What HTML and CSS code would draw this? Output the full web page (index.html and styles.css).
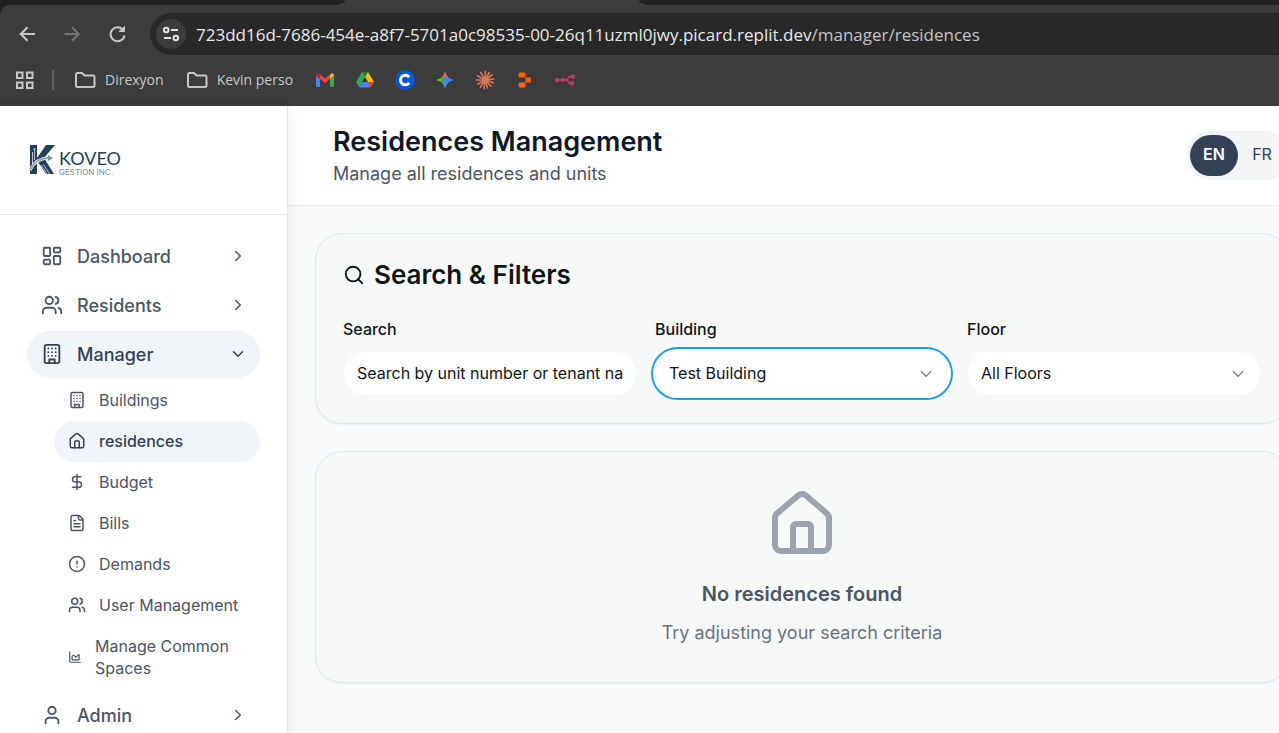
FILE: index.html
```html
<!DOCTYPE html>
<html lang="en">
<head>
<meta charset="utf-8">
<title>Residences Management</title>
<link rel="stylesheet" href="styles.css">
</head>
<body>
<svg class="sprite" aria-hidden="true">
  <symbol id="i-dashboard" viewBox="0 0 24 24"><rect x="3" y="3" width="7" height="9" rx="1"/><rect x="14" y="3" width="7" height="5" rx="1"/><rect x="14" y="12" width="7" height="9" rx="1"/><rect x="3" y="16" width="7" height="5" rx="1"/></symbol>
  <symbol id="i-users" viewBox="0 0 24 24"><path d="M16 21v-2a4 4 0 0 0-4-4H6a4 4 0 0 0-4 4v2"/><circle cx="9" cy="7" r="4"/><path d="M22 21v-2a4 4 0 0 0-3-3.870"/><path d="M16 3.130a4 4 0 0 1 0 7.750"/></symbol>
  <symbol id="i-building" viewBox="0 0 24 24"><rect x="4" y="2" width="16" height="20" rx="2"/><path d="M9 22v-4h6v4"/><path d="M8 6h.01M16 6h.01M12 6h.01M12 10h.01M12 14h.01M16 10h.01M16 14h.01M8 10h.01M8 14h.01"/></symbol>
  <symbol id="i-house" viewBox="0 0 24 24"><path d="M15 21v-8a1 1 0 0 0-1-1h-4a1 1 0 0 0-1 1v8"/><path d="M3 10a2 2 0 0 1 .709-1.528l7-5.999a2 2 0 0 1 2.582 0l7 5.999A2 2 0 0 1 21 10v9a2 2 0 0 1-2 2H5a2 2 0 0 1-2-2z"/></symbol>
  <symbol id="i-dollar" viewBox="0 0 24 24"><path d="M12 2v20"/><path d="M17 5H9.500a3.500 3.500 0 0 0 0 7h5a3.500 3.500 0 0 1 0 7H6"/></symbol>
  <symbol id="i-file" viewBox="0 0 24 24"><path d="M15 2H6a2 2 0 0 0-2 2v16a2 2 0 0 0 2 2h12a2 2 0 0 0 2-2V7Z"/><path d="M14 2v4a2 2 0 0 0 2 2h4"/><path d="M10 9H8M16 13H8M16 17H8"/></symbol>
  <symbol id="i-alert" viewBox="0 0 24 24"><circle cx="12" cy="12" r="10"/><path d="M12 8v4M12 16h.01"/></symbol>
  <symbol id="i-chart" viewBox="0 0 24 24"><path d="M3 3v16a2 2 0 0 0 2 2h16"/><path d="M7 11.207a.5.5 0 0 1 .146-.353l2-2a.5.5 0 0 1 .708 0l3.292 3.292a.5.5 0 0 0 .708 0l4.292-4.292a.5.5 0 0 1 .854.353V16a1 1 0 0 1-1 1H8a1 1 0 0 1-1-1z"/></symbol>
  <symbol id="i-user" viewBox="0 0 24 24"><path d="M19 21v-2a4 4 0 0 0-4-4H9a4 4 0 0 0-4 4v2"/><circle cx="12" cy="7" r="4"/></symbol>
  <symbol id="i-right" viewBox="0 0 24 24"><path d="m9 18 6-6-6-6"/></symbol>
  <symbol id="i-down" viewBox="0 0 24 24"><path d="m6 9 6 6 6-6"/></symbol>
  <symbol id="i-search" viewBox="0 0 24 24"><circle cx="11" cy="11" r="8"/><path d="m21 21-4.300-4.300"/></symbol>
  <symbol id="i-folder" viewBox="0 0 22 18"><path d="M2 14.500V3.500a1.500 1.500 0 0 1 1.500-1.500h4.500l2.500 2.500h8.500a1.500 1.500 0 0 1 1.500 1.500v8.500a1.500 1.500 0 0 1-1.500 1.500h-15.500a1.500 1.500 0 0 1-1.500-1.500z"/></symbol>
</svg>

<div class="browser">
  <div class="tabs"><div class="tabs-left"></div><div class="tabs-active"></div><div class="tabs-right"></div></div>
  <div class="toolbar">
    <div class="nav-row">
      <button class="tool" aria-label="Back"><svg class="icon20" viewBox="0 0 20 20"><path d="M18 10H4M10.500 3.200 3.700 10l6.800 6.800"/></svg></button>
      <button class="tool tool-off" aria-label="Forward"><svg class="icon20" viewBox="0 0 20 20"><path d="M2.500 10h14M10 3.200l6.800 6.800-6.800 6.800"/></svg></button>
      <button class="tool" aria-label="Reload"><svg class="icon20" viewBox="0 0 20 20"><path d="M16.300 6.200A7 7 0 1 0 17.500 11.300"/><path d="M17.500 2.500v5H12z" fill="currentColor" stroke-width="1"/></svg></button>
      <div class="address">
        <button class="site-info" aria-label="Site information"><svg class="icon20" viewBox="0 0 20 20"><circle cx="5.200" cy="6" r="2.300"/><path d="M10 6h7M3 14h7"/><circle cx="14.800" cy="14" r="2.300"/></svg></button>
        <div class="url">723dd16d-7686-454e-a8f7-5701a0c98535-00-26q11uzml0jwy.picard.replit.dev<span>/manager/residences</span></div>
      </div>
    </div>
    <div class="bookmarks">
      <button class="apps" aria-label="Apps"><svg class="icon20" viewBox="0 0 20 20"><path d="M3 2.500h5.500v5.500H3zM13 2.500h5.500v5.500H13zM3 12.500h5.500V18H3zM13 12.500h5.500V18H13z"/></svg></button>
      <div class="divider"></div>
      <a class="folder" href="#"><svg class="folder-icon"><use href="#i-folder"/></svg>Direxyon</a>
      <a class="folder" href="#"><svg class="folder-icon"><use href="#i-folder"/></svg>Kevin perso</a>
      <div class="sites">
        <a href="#" aria-label="Gmail"><svg viewBox="0 0 20 20"><path fill="#4285f4" d="M1 5v10.500A1.300 1.300 0 0 0 2.300 17H5V8.500z"/><path fill="#34a853" d="M15 8.500V17h2.700a1.300 1.300 0 0 0 1.300-1.500V5z"/><path fill="#ea4335" d="M5 4.500v4.600l5 3.900 5-3.900V4.500l-5 3.800z"/><path fill="#c5221f" d="M1 5v1l4 3.100V4.500l-.8-.6C2.800 2.900 1 3.600 1 5z"/><path fill="#fbbc04" d="M15 4.500v4.600l4-3.100V5c0-1.400-1.800-2.100-3.200-1.100z"/></svg></a>
        <a href="#" aria-label="Drive"><svg viewBox="0 0 20 20"><path fill="#34a853" d="m7 2 3 5-6 10-3-5z"/><path fill="#fbbc04" d="M7 2h6l6 10h-6z"/><path fill="#188038" d="M7 2h6l-3 5z"/><path fill="#3c3c3c" d="m10 7.500 2.700 4.500H7.300z"/><path fill="#4285f4" d="M7 12h6l2 5.500H5.500L4 17z"/><path fill="#ea4335" d="M13 12h6l-2.500 4.500-1.500 1z"/></svg></a>
        <a href="#" aria-label="C"><svg viewBox="0 0 20 20"><circle cx="10" cy="10" r="10" fill="#0756d8"/><path d="M14.200 7.200A4.800 4.800 0 1 0 14.200 12.800" fill="none" stroke="#fff" stroke-width="3"/></svg></a>
        <a href="#" aria-label="Gemini"><svg viewBox="0 0 20 20"><defs><linearGradient id="gem" x1="0" y1=".4" x2="1" y2=".6"><stop offset="0" stop-color="#fbbc04"/><stop offset=".35" stop-color="#34a853"/><stop offset=".55" stop-color="#4285f4"/><stop offset="1" stop-color="#4285f4"/></linearGradient></defs><path fill="url(#gem)" d="M10 1c1.200 5 4 7.800 9 9-5 1.200-7.800 4-9 9-1.200-5-4-7.800-9-9 5-1.200 7.800-4 9-9z"/><path fill="#ea5a5a" d="M10 1c.6 2.600 1.500 4.500 3 6H7c1.500-1.500 2.400-3.400 3-6z"/></svg></a>
        <a href="#" aria-label="Claude"><svg viewBox="0 0 20 20"><path stroke="#d97757" stroke-width="1.600" d="M10 10 10.500.8M10 10l4.500-8M10 10l7.500-5.500M10 10l9.300-1M10 10l9 3M10 10l6.500 6.800M10 10l2.800 8.800M10 10l-1 9.300M10 10l-5 7.800M10 10l-7.800 4.500M10 10H.8M10 10 2 5.500M10 10 5.500 2"/></svg></a>
        <a href="#" aria-label="Replit"><svg viewBox="0 0 20 20" fill="#ff6200"><path d="M4.500 2.500h5a1 1 0 0 1 1 1v4h-6a1 1 0 0 1-1-1v-3a1 1 0 0 1 1-1zM10.500 7.500H15a1 1 0 0 1 1 1v3a1 1 0 0 1-1 1h-4.500zM4.500 12.500h6v4a1 1 0 0 1-1 1h-5a1 1 0 0 1-1-1v-3a1 1 0 0 1 1-1z"/></svg></a>
        <a href="#" aria-label="n8n"><svg viewBox="0 0 20 20" fill="none" stroke="#d4426d" stroke-width="1.300"><circle cx="2" cy="10" r="1.500"/><circle cx="8" cy="10" r="1.500"/><path d="M3.500 10h3M9.500 10h2.300c1.500 0 1.200-3.500 3-3.500h1.400M11.800 10c1.500 0 1.200 3.500 3 3.500h.5"/><circle cx="17.900" cy="6.500" r="1.500"/><circle cx="16.900" cy="13.500" r="1.500"/></svg></a>
      </div>
    </div>
  </div>
</div>

<div class="app">
  <aside class="sidebar">
    <div class="brand">
      <svg class="brand-mark" viewBox="0 0 26 30"><path fill="#243f5c" d="M1 0h7v13L17 0h9L15 13l10 16h-8L9 17l-1 2v10H1z"/><path fill="none" stroke="#fff" stroke-width="3" d="M1 25C5 17 11 13 20 13"/><path fill="none" stroke="#9aa8a5" stroke-width="2" d="M1 25C5 17 11 13 20 13"/><path fill="#7f9291" d="m19 10 5 3-5 3z"/><path fill="none" stroke="#fff" stroke-width=".7" d="M3.500 7v12M5.500 3v12M12 20l6 9M14.500 19.500l6 9.500"/><circle cx="5.500" cy="4" r="1" fill="#b8c3c7"/></svg>
      <div class="brand-text"><div class="brand-name">KOVEO</div><div class="brand-sub">GESTION INC.</div></div>
    </div>
    <nav class="menu">
      <button class="item"><svg class="icon22"><use href="#i-dashboard"/></svg><span>Dashboard</span><svg class="icon18"><use href="#i-right"/></svg></button>
      <button class="item"><svg class="icon22"><use href="#i-users"/></svg><span>Residents</span><svg class="icon18"><use href="#i-right"/></svg></button>
      <div class="group">
        <button class="item active"><svg class="icon22"><use href="#i-building"/></svg><span>Manager</span><svg class="icon18"><use href="#i-down"/></svg></button>
        <div class="submenu">
          <a class="subitem" href="#"><svg class="icon18"><use href="#i-building"/></svg>Buildings</a>
          <a class="subitem active" href="#"><svg class="icon18"><use href="#i-house"/></svg>residences</a>
          <a class="subitem" href="#"><svg class="icon18"><use href="#i-dollar"/></svg>Budget</a>
          <a class="subitem" href="#"><svg class="icon18"><use href="#i-file"/></svg>Bills</a>
          <a class="subitem" href="#"><svg class="icon18"><use href="#i-alert"/></svg>Demands</a>
          <a class="subitem" href="#"><svg class="icon18"><use href="#i-users"/></svg>User Management</a>
          <a class="subitem" href="#"><svg class="icon14"><use href="#i-chart"/></svg>Manage Common Spaces</a>
        </div>
      </div>
      <button class="item"><svg class="icon22"><use href="#i-user"/></svg><span>Admin</span><svg class="icon18"><use href="#i-right"/></svg></button>
    </nav>
  </aside>

  <main class="main">
    <header class="header">
      <div>
        <h1>Residences Management</h1>
        <p>Manage all residences and units</p>
      </div>
      <div class="lang"><button class="on">EN</button><button>FR</button></div>
    </header>
    <div class="content">
      <section class="card filters">
        <h2><svg class="icon22"><use href="#i-search"/></svg>Search &amp; Filters</h2>
        <div class="fields">
          <div class="field"><label for="search">Search</label><input class="control" id="search" type="text" placeholder="Search by unit number or tenant name..."></div>
          <div class="field"><label for="building">Building</label><div class="select"><select class="control focused" id="building"><option>Test Building</option></select><svg class="icon18"><use href="#i-down"/></svg></div></div>
          <div class="field"><label for="floor">Floor</label><div class="select"><select class="control" id="floor"><option>All Floors</option></select><svg class="icon18"><use href="#i-down"/></svg></div></div>
        </div>
      </section>
      <section class="card empty">
        <svg class="icon72"><use href="#i-house"/></svg>
        <h3>No residences found</h3>
        <p>Try adjusting your search criteria</p>
      </section>
    </div>
  </main>
</div>
</body>
</html>
```

FILE: styles.css
```css
* { box-sizing: border-box; }
body { margin: 0; height: 100vh; overflow: hidden; display: flex; flex-direction: column; font-family: Inter, "Liberation Sans", sans-serif; font-size: 16px; }
h1, h2, h3, p { margin: 0; }
button, input, select { font: inherit; color: inherit; border: 0; background: none; padding: 0; margin: 0; }
a { color: inherit; text-decoration: none; }
svg { display: block; flex: none; }
.sprite { width: 0; height: 0; position: absolute; }
.icon14, .icon18, .icon20, .icon22, .icon72, .folder-icon { fill: none; stroke: currentColor; stroke-width: 2; stroke-linecap: round; stroke-linejoin: round; }
.icon14 { width: 14px; height: 14px; }
.icon18 { width: 18px; height: 18px; }
.icon20 { width: 20px; height: 20px; stroke-linecap: butt; stroke-linejoin: miter; }
.icon22 { width: 22px; height: 22px; }
.icon72 { width: 72px; height: 72px; }

/* Browser frame */
.browser { flex: none; background: #1f2120; font-family: "Open Sans", "Noto Sans", sans-serif; }
.tabs { display: flex; height: 5px; background: #3c3c3c; }
.tabs-left { width: 27%; background: #1f2120; border-bottom-right-radius: 10px 5px; }
.tabs-active { width: 23%; }
.tabs-right { flex: 1; background: #1f2120; border-bottom-left-radius: 10px 5px; }
.toolbar { background: #3c3c3c; border-top-left-radius: 10px; padding: 8px 0 2px; color: #c7c7c7; }
.nav-row { display: flex; align-items: center; height: 42px; padding-left: 17px; }
.tool { width: 20px; height: 20px; margin-right: 25px; }
.tool-off { color: #757575; }
.address { flex: 1; height: 42px; margin-left: -2px; padding-left: 6px; display: flex; align-items: center; gap: 10px; background: #282828; border-radius: 21px 0 0 21px; }
.site-info { display: grid; place-items: center; width: 30px; height: 30px; border-radius: 50%; background: #3c3c3c; color: #e3e3e3; }
.url { font-size: 17px; color: #e8e8e8; white-space: nowrap; }
.url span { color: #c2c2c2; }
.bookmarks { display: flex; align-items: center; height: 49px; padding-left: 14px; font-size: 14px; }
.divider { width: 2px; height: 20px; margin: 0 20px 0 18px; background: #5e5e5e; }
.folder { display: flex; align-items: center; gap: 9px; margin-right: 22px; }
.folder-icon { width: 22px; height: 18px; }
.sites { display: flex; gap: 20px; }
.sites svg { width: 20px; height: 20px; }

/* Application */
.app { flex: 1; min-height: 0; display: flex; }
.sidebar { flex: none; width: 288px; background: #fff; border-right: 1px solid #e5e7eb; box-shadow: 0 4px 14px rgba(0, 0, 0, .08); z-index: 1; color: #4b5563; }
.brand { display: flex; align-items: center; gap: 4px; height: 109px; padding-left: 29px; border-bottom: 1px solid #e5e7eb; }
.brand-mark { width: 26px; height: 30px; }
.brand-text { padding-top: 6px; }
.brand-name { font: 18px/18px Lato, sans-serif; color: #243f5c; }
.brand-sub { font: 8px/10px Inter, sans-serif; color: #7c8a96; }
.menu { display: flex; flex-direction: column; gap: 3px; padding: 18px 27px; }
.item { display: flex; align-items: center; gap: 14px; width: 100%; height: 46px; padding: 0 13px 0 14px; border-radius: 23px; font-size: 18px; font-weight: 500; text-align: left; }
.item span { flex: 1; }
.active { background: #f1f5f9; color: #334155; }
.item.active { box-shadow: 0 1px 2px rgba(0, 0, 0, .05); }
.submenu { display: flex; flex-direction: column; margin: 3px 0 0 27px; }
.subitem { display: flex; align-items: center; gap: 13px; padding: 9px 14px 10px; border-radius: 21px; line-height: 22px; }
.subitem.active { font-weight: 500; }

.main { flex: 1; min-width: 0; margin-right: -37px; background: #f8fafc; }
.header { display: flex; align-items: center; justify-content: space-between; height: 100px; padding: 0 26px 0 45px; background: #fff; border-bottom: 1px solid #e5e7eb; }
.header h1 { font-size: 27px; line-height: 36px; font-weight: 600; color: #111827; }
.header p { font-size: 18px; line-height: 28px; color: #4b5563; }
.lang { display: flex; padding: 4px; border-radius: 25px; background: #f3f4f6; color: #374151; }
.lang button { width: 48px; height: 41px; padding-bottom: 3px; border-radius: 21px; font-weight: 400; }
.lang .on { background: #334155; color: #fff; font-weight: 600; }
.content { display: flex; flex-direction: column; gap: 27px; padding: 27px; }
.card { border: 1px solid #e2e8f0; border-radius: 27px; background: #f7f9f9; box-shadow: 0 1px 2px rgba(0, 0, 0, .05); }
.filters { padding: 27px; color: #0f1419; }
.filters h2 { display: flex; align-items: center; gap: 9px; font-size: 26px; line-height: 27px; font-weight: 600; }
.fields { display: grid; grid-template-columns: repeat(3, 1fr); gap: 18px; margin-top: 27px; }
.field { display: flex; flex-direction: column; gap: 8px; }
.field label { font-weight: 500; line-height: 28px; }
.control { appearance: none; width: 100%; height: 45px; padding: 0 13px 2px; border: 1px solid #f7f9f9; border-radius: 23px; background: #fff; }
.control::placeholder { color: #0f1419; opacity: 1; }
.focused { box-shadow: 0 0 0 2px #fff, 0 0 0 4px #1e9df1; }
.select { display: grid; align-items: center; }
.select > * { grid-area: 1 / 1; }
.select svg { justify-self: end; margin-right: 14px; opacity: .5; pointer-events: none; }
.empty { display: flex; flex-direction: column; align-items: center; padding: 36px 36px 35px; color: #9ca3af; }
.empty h3 { margin-top: 18px; font-size: 20px; line-height: 32px; font-weight: 600; color: #4b5563; }
.empty p { margin-top: 9px; font-size: 18px; line-height: 28px; color: #6b7280; }
```
